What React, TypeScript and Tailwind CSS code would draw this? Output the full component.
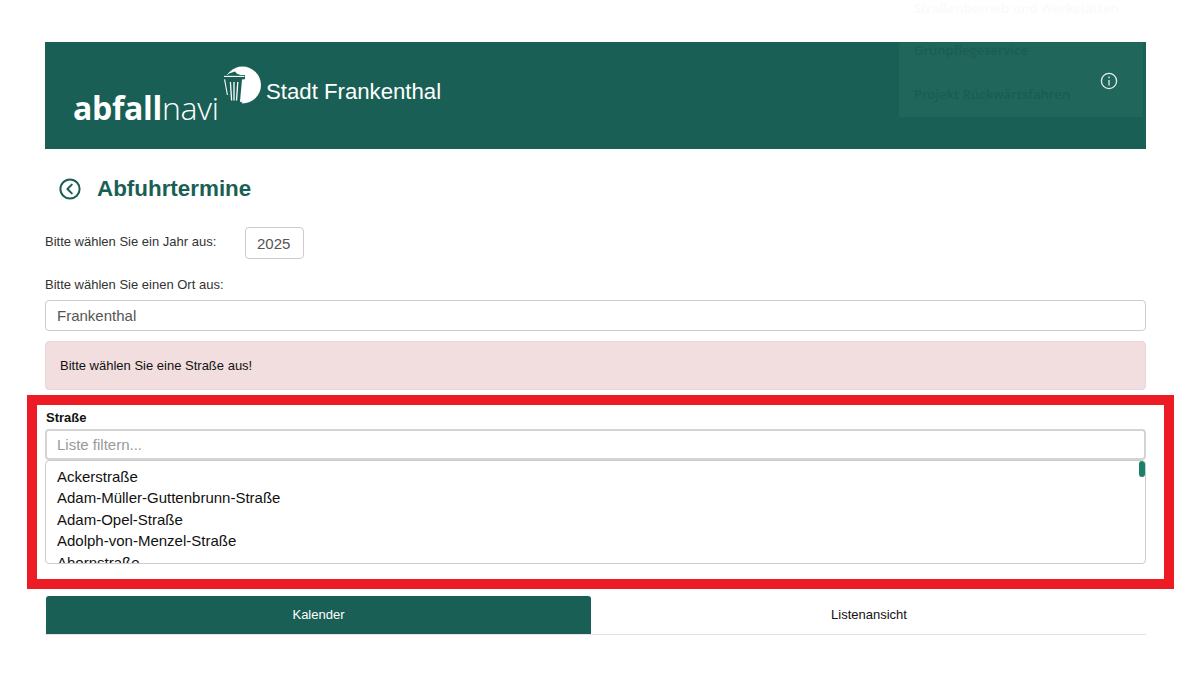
import React from 'react';

const streets = [
  'Ackerstraße',
  'Adam-Müller-Guttenbrunn-Straße',
  'Adam-Opel-Straße',
  'Adolph-von-Menzel-Straße',
  'Ahornstraße',
];

function Logo() {
  return (
    <div className="flex items-start">
      <div className="mt-[41px] w-[148px] whitespace-nowrap font-['Open_Sans',sans-serif] text-[32px] leading-[50px] tracking-[-0.3px] text-white">
        <span className="font-bold">abfall</span>
        <span className="font-light">navi</span>
      </div>
      <svg viewBox="0 0 40 40" className="mt-[23px] h-[40px] w-[40px]">
        <circle cx="21.5" cy="20" r="18.5" fill="#fff" />
        <path d="M0 10h24v3.5l-3 26H0Z" fill="#1a5f55" />
        <path d="M8 8.4 14 6.4l2 2.4 5 1.6H6Z" fill="#1a5f55" />
        <path d="M3 11.4h20.5" stroke="#fff" strokeWidth="1.1" />
        <path d="M3.6 14.4 6.4 30" stroke="#fff" strokeWidth="1.1" />
        <path d="M9.4 17 10.6 35.5M13 17v18.5M16.8 17l-1.3 18.5" stroke="#fff" strokeWidth="1.3" fill="none" />
        <path d="M21 14.5 19 36.5l2.5 1.2L25 14Z" fill="#fff" />
      </svg>
      <div className="ml-[5px] mt-[35px] text-[22.2px] leading-[30px] text-white">Stadt Frankenthal</div>
    </div>
  );
}

export default function App() {
  return (
    <div className="relative h-[675px] overflow-hidden bg-white px-[45px] pt-[42px] font-['Liberation_Sans',Arial,sans-serif]">
      <div className="absolute left-[914px] top-0 font-['Open_Sans',sans-serif] text-[13px] font-semibold leading-[17px] text-[#fafafa]">
        Straßenbetrieb und Werkstätten
      </div>

      <header className="relative h-[107px] w-[1101px] bg-[#1a5f55] pl-[28px]">
        <Logo />
        <div className="absolute left-[854px] top-0 h-[75px] w-[244px] bg-[#20665b] pl-[15px] font-['Open_Sans',sans-serif] text-[13px] font-semibold text-[#1c5d52]">
          <div className="leading-[17px]">Grünpflegeservice</div>
          <div className="mt-[27px] leading-[17px]">Projekt Rückwärtsfahren</div>
        </div>
        <svg viewBox="0 0 18 18" className="absolute left-[1055px] top-[30px] h-[18px] w-[18px]" fill="none" stroke="#e4efec" strokeWidth="1.3">
          <circle cx="9" cy="9" r="7.6" />
          <path d="M9 8v5.4" />
          <path d="M9 4.6v1.6" />
        </svg>
      </header>

      <div className="mt-[29px] flex h-[22px] items-center pl-[14px]">
        <svg viewBox="0 0 22 22" className="h-[22px] w-[22px]" fill="none" stroke="#1a5f55" strokeWidth="2">
          <circle cx="11" cy="11" r="9.6" />
          <path d="M12.8 6.6 8.4 11l4.4 4.4" strokeLinecap="round" strokeLinejoin="round" />
        </svg>
        <h1 className="ml-[16px] text-[22.4px] font-bold leading-[22px] text-[#1a5f55]">Abfuhrtermine</h1>
      </div>

      <div className="mt-[27px] flex items-start">
        <span className="mt-[6px] w-[200px] text-[13px] leading-[18px] text-[#333]">Bitte wählen Sie ein Jahr aus:</span>
        <div className="flex h-[32px] w-[59px] items-center rounded-[4px] border border-[#ccc] pl-[11px] pt-[3px] text-[15px] text-[#555]">2025</div>
      </div>

      <div className="mt-[17px] text-[13px] leading-[18px] text-[#333]">Bitte wählen Sie einen Ort aus:</div>
      <div className="mt-[6px] flex h-[31px] w-[1101px] items-center rounded-[4px] border border-[#ccc] pl-[11px] pt-[2px] text-[15px] text-[#555]">Frankenthal</div>

      <div className="mt-[10px] flex h-[49px] w-[1101px] items-center rounded-[4px] border border-[#ebd5d7] bg-[#f2dede] pl-[14px] text-[13px] text-[#111]">
        Bitte wählen Sie eine Straße aus!
      </div>

      <section className="-ml-[18px] mt-[5px] h-[194px] w-[1147px] border-[10px] border-[#ed1c24] px-[8px] pt-[4px]">
        <label className="block pl-[1px] text-[13px] font-bold leading-[18px] text-[#111]">Straße</label>
        <div className="mt-[2px] flex h-[31px] w-[1101px] items-center rounded-[4px] border-2 border-[#d4d4d4] pl-[10px] pt-[1px] text-[15px] text-[#999]">Liste filtern...</div>
        <div className="relative h-[104px] w-[1101px] overflow-hidden rounded-[4px] border border-[#ccc] pl-[11px] pt-[5px]">
          {streets.map((s) => (
            <div key={s} className="text-[15px] leading-[21.4px] text-[#111]">{s}</div>
          ))}
          <div className="absolute right-0 top-0 h-[16px] w-[6px] rounded-[3px] bg-[#1a7f6b]" />
        </div>
      </section>

      <nav className="mt-[7px] flex h-[39px] w-[1101px] border-b border-[#e2e2e2]">
        <div className="ml-[1px] flex w-[545px] items-center justify-center rounded-t-[3px] bg-[#1a5f55] pb-[1px] text-[13px] text-white">Kalender</div>
        <div className="flex flex-1 items-center justify-center pb-[1px] pl-[1px] text-[13px] text-[#111]">Listenansicht</div>
      </nav>
    </div>
  );
}
